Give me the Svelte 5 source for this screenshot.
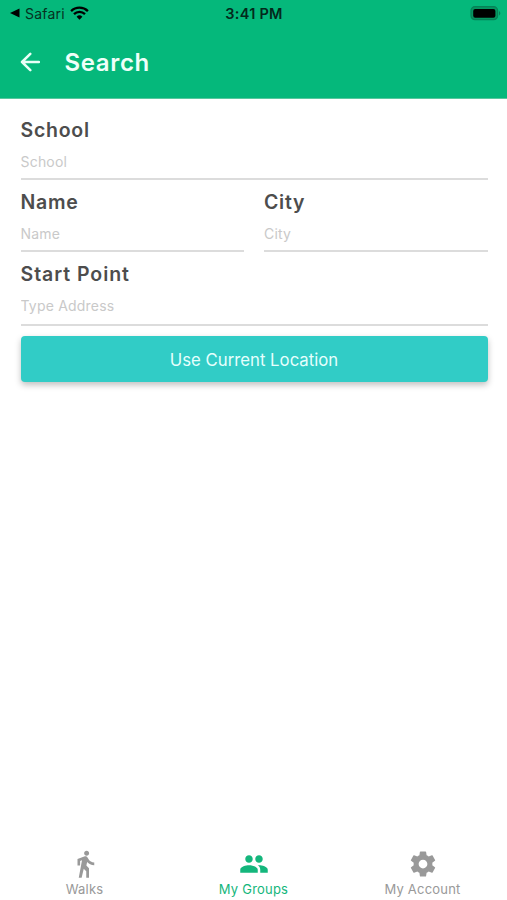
<script lang="ts">
  // form values
  let school = "";
  let name = "";
  let city = "";
  let address = "";

  // tabs along the bottom of the screen
  const tabs = [
    {
      label: "Walks",
      name: "walks",
      icon: "M13.3 5.3c1.1 0 2-.9 2-2s-.9-2-2-2-2 .9-2 2 .9 2 2 2zM9.6 8.9L7 23h2.3l1.7-7.2 2 1.9V23h2.2v-7.7l-2.1-2.1.6-2.9c1.3 1.5 3.3 2.6 5.7 2.6v-2.2c-2 0-3.6-.9-4.4-2.3l-1-1.6c-.4-.6-1-1-1.8-1-.3 0-.5.1-.8.1L6 8v5.2h2.1V9.5l1.5-.6",
    },
    {
      label: "My Groups",
      name: "groups",
      icon: "M16 11c1.66 0 2.99-1.34 2.99-3S17.66 5 16 5s-3 1.34-3 3 1.34 3 3 3zm-8 0c1.66 0 2.99-1.34 2.99-3S9.66 5 8 5 5 6.34 5 8s1.34 3 3 3zm0 2c-2.33 0-7 1.17-7 3.5V19h14v-2.5c0-2.33-4.67-3.5-7-3.5zm8 0c-.29 0-.62.02-.97.05 1.16.84 1.97 1.97 1.97 3.45V19h6v-2.5c0-2.33-4.67-3.5-7-3.5z",
    },
    {
      label: "My Account",
      name: "account",
      icon: "M19.43 12.98c.04-.32.07-.64.07-.98s-.03-.66-.07-.98l2.11-1.65c.19-.15.24-.42.12-.64l-2-3.46c-.12-.22-.39-.3-.61-.22l-2.49 1c-.52-.4-1.08-.73-1.69-.98l-.38-2.65C14.46 2.18 14.25 2 14 2h-4c-.25 0-.46.18-.49.42l-.38 2.65c-.61.25-1.17.59-1.69.98l-2.49-1c-.23-.09-.49 0-.61.22l-2 3.46c-.13.22-.07.49.12.64l2.11 1.65c-.04.32-.07.65-.07.98s.03.66.07.98l-2.11 1.65c-.19.15-.24.42-.12.64l2 3.46c.12.22.39.3.61.22l2.49-1c.52.4 1.08.73 1.69.98l.38 2.65c.03.24.24.42.49.42h4c.25 0 .46-.18.49-.42l.38-2.65c.61-.25 1.17-.59 1.69-.98l2.49 1c.23.09.49 0 .61-.22l2-3.46c.12-.22.07-.49-.12-.64l-2.11-1.65zM12 15.5c-1.93 0-3.5-1.57-3.5-3.5s1.57-3.5 3.5-3.5 3.5 1.57 3.5 3.5-1.57 3.5-3.5 3.5z",
    },
  ];

  let active = "groups";
</script>

<div class="screen">
  <header>
    <div class="status">
      <div class="carrier">
        <svg width="10" height="10" viewBox="0 0 10 10"><path d="M0 5L9.5 .5v9z" /></svg>
        <span>Safari</span>
        <svg width="19" height="14" viewBox="0 0 19 14">
          <g fill="none" stroke="#000" stroke-width="2.3">
            <path d="M1.1 5.1a12 12 0 0 1 16.8 0" />
            <path d="M4 8.1a7.8 7.8 0 0 1 11 0" />
          </g>
          <path d="M9.5 13.7L6.6 10.7a4.1 4.1 0 0 1 5.8 0z" />
        </svg>
      </div>
      <div class="time">3:41 PM</div>
      <div class="battery">
        <svg width="31" height="15" viewBox="0 0 31 15">
          <rect x="1" y=".7" width="26.6" height="13" rx="4" fill="#059660" stroke="#078157" stroke-width="1.2" />
          <rect x="3.2" y="2.9" width="22.2" height="8.8" rx="2" />
          <path d="M29 5v4.4c1.8-.7 1.8-3.7 0-4.4z" fill="#078157" />
        </svg>
      </div>
    </div>
    <div class="toolbar">
      <button class="back" aria-label="Back">
        <svg width="20" height="20" viewBox="0 0 20 20">
          <path d="M10.3 1.8L2 10l8.3 8.2M2 10h17" />
        </svg>
      </button>
      <h1>Search</h1>
    </div>
  </header>

  <main>
    <label class="field">
      <span>School</span>
      <input placeholder="School" bind:value={school} />
    </label>
    <div class="row">
      <label class="field">
        <span>Name</span>
        <input placeholder="Name" bind:value={name} />
      </label>
      <label class="field">
        <span>City</span>
        <input placeholder="City" bind:value={city} />
      </label>
    </div>
    <label class="field address">
      <span>Start Point</span>
      <input placeholder="Type Address" bind:value={address} />
    </label>
    <button class="location">Use Current Location</button>
  </main>

  <nav>
    {#each tabs as tab}
      <button class:active={active === tab.name} on:click={() => (active = tab.name)}>
        <svg width="30" height="30" viewBox="0 0 24 24"><path d={tab.icon} /></svg>
        <span>{tab.label}</span>
      </button>
    {/each}
  </nav>
</div>

<style>
  .screen {
    display: flex;
    flex-direction: column;
    height: 100vh;
    background-color: #fff;
    font-family: Inter, "Liberation Sans", sans-serif;
  }

  button {
    border: none;
    padding: 0;
    background: none;
    font-family: inherit;
  }

  header {
    height: 99px;
    border-bottom: 1px solid #58c79e;
    box-sizing: border-box;
    background-color: #05b87b;
  }

  .status {
    display: grid;
    grid-template-columns: 1fr auto 1fr;
    align-items: center;
    height: 27px;
    padding: 0 6px 0 10px;
  }

  .carrier {
    display: flex;
    align-items: center;
    font-size: 14px;
    letter-spacing: 0.2px;
    color: #06301f;
  }

  .carrier svg {
    margin-bottom: 1px;
  }

  .carrier span {
    margin: 0 5px 0 5px;
  }

  .time {
    margin-right: 3px;
    font-size: 14.5px;
    font-weight: 600;
    letter-spacing: 0.25px;
    color: #03291b;
  }

  .battery {
    display: flex;
    justify-content: flex-end;
  }

  .toolbar {
    display: flex;
    align-items: center;
    height: 70px;
    padding-left: 20px;
  }

  .back {
    display: flex;
    width: 20px;
    margin-right: 24.5px;
  }

  .back path {
    fill: none;
    stroke: #e9fff7;
    stroke-width: 2.5;
    stroke-linecap: round;
    stroke-linejoin: round;
  }

  h1 {
    margin: 0;
    font-size: 24px;
    font-weight: 600;
    letter-spacing: 0.65px;
    color: #effff9;
  }

  main {
    flex: 1;
    padding: 19px 19.5px 0 20.5px;
  }

  .field {
    display: flex;
    flex-direction: column;
    flex: 1;
    min-width: 0;
    height: 72px;
  }

  .field span {
    height: 24px;
    line-height: 25px;
    font-size: 19.5px;
    font-weight: 600;
    letter-spacing: 0.75px;
    color: #4d4d4d;
  }

  input {
    height: 38px;
    box-sizing: border-box;
    padding: 2px 0 0;
    border: none;
    border-bottom: 2px solid #dcdcdc;
    border-radius: 0;
    outline: none;
    background: none;
    font-family: inherit;
    font-size: 14px;
    letter-spacing: 0.2px;
    color: #4d4d4d;
  }

  input::placeholder {
    color: #c9c9c9;
  }

  .row {
    display: flex;
    gap: 20px;
  }

  .address {
    height: 74px;
  }

  .address span {
    letter-spacing: 0.95px;
  }

  .address input {
    height: 40px;
    padding: 0;
  }

  .location {
    width: 100%;
    height: 46px;
    padding-top: 2px;
    border-radius: 4px;
    background-color: #31ccc6;
    box-shadow: 0 3px 6px rgba(0, 0, 0, 0.25);
    font-size: 16.75px;
    color: #e6fffd;
  }

  nav {
    display: flex;
    height: 51px;
  }

  nav button {
    display: flex;
    flex: 1;
    flex-direction: column;
    align-items: center;
    font-size: 13px;
    letter-spacing: 0.2px;
    color: #999;
  }

  nav svg {
    fill: currentColor;
  }

  nav span {
    line-height: 20px;
  }

  nav .active {
    color: #14b67c;
  }
</style>
